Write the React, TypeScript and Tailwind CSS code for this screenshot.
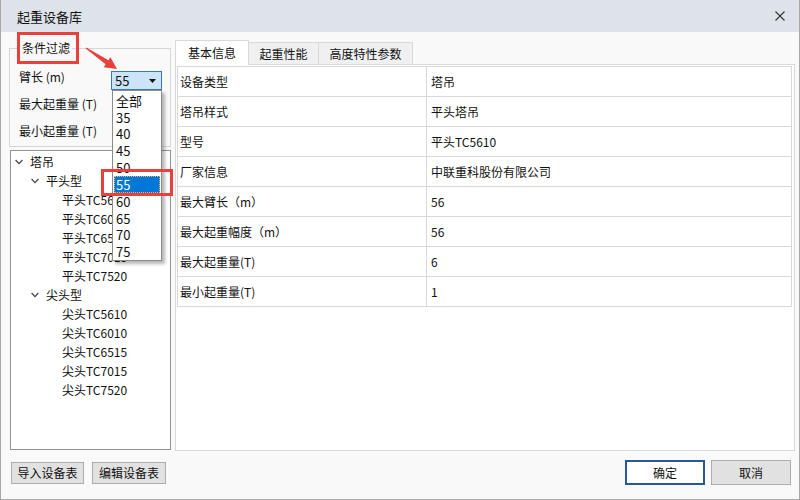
import React from "react";

const FONT = { fontFamily: '"Noto Sans CJK SC", "Microsoft YaHei", sans-serif' };

function Chevron() {
  return (
    <svg width="8" height="6" viewBox="0 0 8 6" className="block">
      <polyline points="0.6,1 4,4.6 7.4,1" fill="none" stroke="#404040" strokeWidth="1.2" />
    </svg>
  );
}

type Node = { label: string; level: number; parent?: boolean };

const tree: Node[] = [
  { label: "塔吊", level: 0, parent: true },
  { label: "平头型", level: 1, parent: true },
  { label: "平头TC5610", level: 2 },
  { label: "平头TC6010", level: 2 },
  { label: "平头TC6515", level: 2 },
  { label: "平头TC7015", level: 2 },
  { label: "平头TC7520", level: 2 },
  { label: "尖头型", level: 1, parent: true },
  { label: "尖头TC5610", level: 2 },
  { label: "尖头TC6010", level: 2 },
  { label: "尖头TC6515", level: 2 },
  { label: "尖头TC7015", level: 2 },
  { label: "尖头TC7520", level: 2 },
];

const indentClass = ["pl-0", "pl-[16px]", "pl-[32px]"];

const rows: [string, string][] = [
  ["设备类型", "塔吊"],
  ["塔吊样式", "平头塔吊"],
  ["型号", "平头TC5610"],
  ["厂家信息", "中联重科股份有限公司"],
  ["最大臂长（m）", "56"],
  ["最大起重幅度（m）", "56"],
  ["最大起重量(T)", "6"],
  ["最小起重量(T)", "1"],
];

const options = ["全部", "35", "40", "45", "50", "55", "60", "65", "70", "75"];

export default function App() {
  return (
    <div
      className="w-[800px] h-[500px] flex flex-col bg-[#f9f9f9] border-x border-b border-[#a8a8a8] text-[12px] text-[#111] overflow-hidden"
      style={FONT}
    >
      {/* title bar */}
      <div className="h-[32px] shrink-0 bg-[#dee2e9] flex items-center justify-between pl-[16px] pr-[14px]">
        <span className="text-[13px] leading-none text-[#111]">起重设备库</span>
        <svg width="10" height="10" viewBox="0 0 10 10">
          <path d="M0.5 0.5 L9.5 9.5 M9.5 0.5 L0.5 9.5" stroke="#333" strokeWidth="1.1" />
        </svg>
      </div>

      {/* body */}
      <div className="relative flex-1 flex">
        {/* left column */}
        <div className="ml-[8px] w-[162px] flex flex-col">
          {/* group box */}
          <div className="mt-[16px] h-[99px] border border-[#d6d6d6] flex flex-col">
            <div className="-mt-[9px] ml-[10px] w-fit px-[2px] bg-[#f9f9f9] leading-[16px]">条件过滤</div>
            <div className="pl-[9px] flex flex-col mt-[7px]">
              <div className="h-[27px] flex items-center justify-between">
                <span className="leading-[16px]">臂长 (m)</span>
                <div className="relative self-end mr-[8px] w-[51px] h-[19px] bg-[#cce4f7] border border-[#3a78b8] flex items-center justify-between pl-[3px] pr-[5px]">
                  <span className="text-[13px] leading-none">55</span>
                  <svg width="7" height="4" viewBox="0 0 7 4">
                    <polygon points="0,0 7,0 3.5,4" fill="#111" />
                  </svg>
                  {/* dropdown list */}
                  <div className="absolute left-[0px] top-[18px] w-[50px] h-[171px] bg-white border border-[#8c8c8c] shadow-[3px_3px_3px_rgba(0,0,0,0.28)] flex flex-col pt-[1px] z-20">
                    {options.map((o) =>
                      o === "55" ? (
                        <div
                          key={o}
                          className="h-[17px] mx-[1px] bg-[#0078d7] text-white border border-dotted border-[#f4b060] flex items-center pl-[1px] text-[13px] leading-none"
                        >
                          {o}
                        </div>
                      ) : (
                        <div key={o} className="h-[17px] flex items-center pl-[3px] text-[13px] leading-none">
                          {o}
                        </div>
                      )
                    )}
                  </div>
                </div>
              </div>
              <div className="h-[27px] flex items-center">
                <span className="leading-[16px]">最大起重量 (T)</span>
              </div>
              <div className="h-[27px] flex items-center">
                <span className="leading-[16px]">最小起重量 (T)</span>
              </div>
            </div>
          </div>

          {/* tree */}
          <div className="mt-[3px] ml-[1px] w-[161px] h-[300px] bg-white border border-[#8f9297] pt-[1px] flex flex-col">
            {tree.map((n, i) => (
              <div key={i} className={`h-[19px] flex items-center ${indentClass[n.level]}`}>
                <div className="w-[19px] flex items-center pl-[4px]">{n.parent ? <Chevron /> : null}</div>
                <span className="leading-none">{n.label}</span>
              </div>
            ))}
          </div>

          {/* bottom buttons */}
          <div className="mt-[12px] flex gap-[8px] ml-[2px]">
            <div className="w-[73px] h-[22px] bg-[#e1e1e1] border border-[#adadad] flex items-center justify-center leading-none">
              导入设备表
            </div>
            <div className="w-[74px] h-[22px] bg-[#e1e1e1] border border-[#adadad] flex items-center justify-center leading-none">
              编辑设备表
            </div>
          </div>
        </div>

        {/* right column */}
        <div className="ml-[4px] w-[620px] flex flex-col">
          {/* tabs */}
          <div className="mt-[8px] flex items-end h-[24px]">
            <div className="relative z-10 w-[74px] h-[25px] -mb-px bg-white border border-b-0 border-[#d9d9d9] flex items-center justify-center leading-none">
              基本信息
            </div>
            <div className="w-[70px] h-[22px] bg-[#f0f0f0] border border-l-0 border-b-0 border-[#d9d9d9] flex items-center justify-center leading-none">
              起重性能
            </div>
            <div className="w-[94px] h-[22px] bg-[#f0f0f0] border border-l-0 border-b-0 border-[#d9d9d9] flex items-center justify-center leading-none">
              高度特性参数
            </div>
          </div>
          {/* tab panel */}
          <div className="h-[387px] bg-white border border-[#d9d9d9] p-[1px]">
            <div className="w-[615px] border border-b-0 border-[#d9d9d9] flex flex-col">
              {rows.map(([k, v]) => (
                <div key={k} className="h-[30px] flex border-b border-[#d9d9d9]">
                  <div className="w-[249px] border-r border-[#d9d9d9] flex items-center pl-[2px] leading-none">{k}</div>
                  <div className="flex-1 flex items-center pl-[4px] leading-none">{v}</div>
                </div>
              ))}
            </div>
          </div>
          {/* ok / cancel */}
          <div className="mt-[9px] flex justify-end gap-[6px] pr-[4px]">
            <div className="w-[80px] h-[25px] bg-white border border-[#2b5797] shadow-[inset_0_0_0_1px_#2b5797] flex items-center justify-center leading-none">
              确定
            </div>
            <div className="w-[80px] h-[25px] bg-[#e1e1e1] border border-[#adadad] flex items-center justify-center leading-none">
              取消
            </div>
          </div>
        </div>

        {/* annotations */}
        <div className="absolute left-[16px] top-0 w-[62px] h-[32px] border-[3px] border-[#e8403a] z-30" />
        <svg className="absolute left-[83px] top-[12px] z-30" width="36" height="28" viewBox="0 0 36 28">
          <polygon
            points="2.3,3.4 24.4,16.2 26.4,13.3 33,25 19.7,23.3 21.6,20.35 1.7,4.6"
            fill="#e8403a"
          />
        </svg>
        <div className="absolute left-[100px] top-[137px] w-[72px] h-[27px] border-[3px] border-[#e8403a] z-30" />
      </div>
    </div>
  );
}
